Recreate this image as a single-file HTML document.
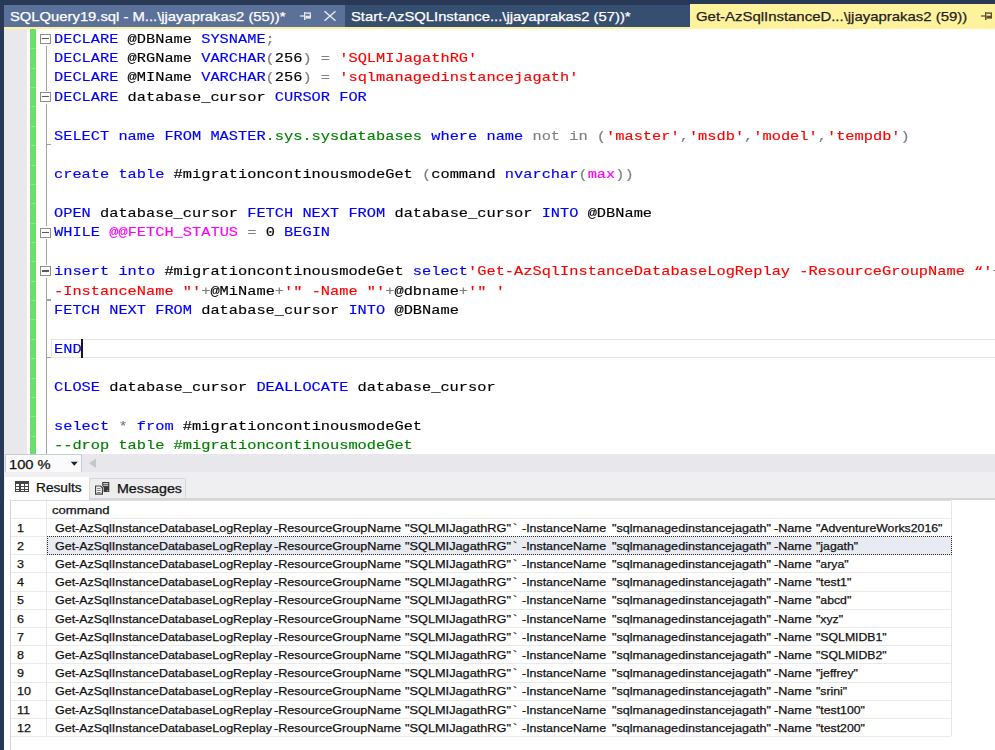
<!DOCTYPE html>
<html><head><meta charset="utf-8">
<style>
*{margin:0;padding:0;box-sizing:border-box}
html,body{width:995px;height:750px;overflow:hidden;background:#fff}
body{position:relative;font-family:"Liberation Sans",sans-serif}
.a{position:absolute}
.t{position:absolute;white-space:pre;height:20px;line-height:20px;transform-origin:0 0;-webkit-text-stroke:0.25px currentColor}
.code{position:absolute;top:0;width:1px;height:454px;-webkit-text-stroke:0.15px currentColor;font-family:"Liberation Mono",monospace;font-size:13.0px;white-space:pre;transform-origin:0 0}
.ln{position:absolute;left:0;height:20px;line-height:20px}
</style></head><body>
<div class="a" style="left:0px;top:0px;width:995px;height:750px;background:#293955;"></div>
<div class="a" style="left:4px;top:5px;width:341px;height:22px;background:#5b7199;"></div>
<div class="a" style="left:345px;top:5px;width:345px;height:22px;background:#364e6f;"></div>
<div class="a" style="left:690px;top:4px;width:305px;height:23px;background:#fff29d;"></div>
<div class="a" style="left:4px;top:27px;width:991px;height:2px;background:#fff29d;"></div>
<div class="t" style="left:10.40px;top:7.40px;font-size:13px;color:#fff;font-family:'Liberation Sans',sans-serif;transform:scaleX(1.1380);">SQLQuery19.sql - M...\jjayaprakas2 (55))*</div>
<div class="t" style="left:350.80px;top:7.40px;font-size:13px;color:#fff;font-family:'Liberation Sans',sans-serif;transform:scaleX(1.1380);">Start-AzSQLInstance...\jjayaprakas2 (57))*</div>
<div class="t" style="left:696.20px;top:7.40px;font-size:13px;color:#1e1e1e;font-family:'Liberation Sans',sans-serif;transform:scaleX(1.1480);">Get-AzSqlInstanceD...\jjayaprakas2 (59))</div>
<svg class="a" style="left:300px;top:11px" width="13" height="10" viewBox="0 0 13 10"><path d="M0 5H4.2" stroke="#e3e7ee" stroke-width="1.3"/><path d="M4.75 1V9" stroke="#e3e7ee" stroke-width="1.5"/><rect x="5.5" y="1.4" width="5.5" height="6.2" fill="#e3e7ee"/><rect x="5.5" y="2.8" width="4.2" height="1.9" fill="#5b7199"/></svg>
<svg class="a" style="left:323px;top:10px" width="14" height="12" viewBox="0 0 14 12"><path d="M1.5 1.3L12.5 10.8M12.5 1.3L1.5 10.8" stroke="#e6e9ef" stroke-width="1.5"/></svg>
<svg class="a" style="left:981px;top:10.8px" width="13" height="10" viewBox="0 0 13 10"><path d="M0 5H4.2" stroke="#5e4e30" stroke-width="1.3"/><path d="M4.75 1V9" stroke="#5e4e30" stroke-width="1.5"/><rect x="5.5" y="1.4" width="5.5" height="6.2" fill="#5e4e30"/><rect x="5.5" y="2.8" width="4.2" height="1.9" fill="#fff29d"/></svg>
<div class="a" style="left:4px;top:29px;width:991px;height:425px;background:#fff;"></div>
<div class="a" style="left:4px;top:29px;width:23px;height:425px;background:#e9e9eb;"></div>
<div class="a" style="left:30px;top:29px;width:6px;height:425px;background:#6ae06a;"></div>
<div class="a" style="left:31px;top:48px;width:5px;height:1px;background:#92e692;"></div>
<div class="a" style="left:31px;top:68px;width:5px;height:1px;background:#92e692;"></div>
<div class="a" style="left:31px;top:87px;width:5px;height:1px;background:#92e692;"></div>
<div class="a" style="left:31px;top:106px;width:5px;height:1px;background:#92e692;"></div>
<div class="a" style="left:31px;top:126px;width:5px;height:1px;background:#92e692;"></div>
<div class="a" style="left:31px;top:145px;width:5px;height:1px;background:#92e692;"></div>
<div class="a" style="left:31px;top:165px;width:5px;height:1px;background:#92e692;"></div>
<div class="a" style="left:31px;top:184px;width:5px;height:1px;background:#92e692;"></div>
<div class="a" style="left:31px;top:203px;width:5px;height:1px;background:#92e692;"></div>
<div class="a" style="left:31px;top:223px;width:5px;height:1px;background:#92e692;"></div>
<div class="a" style="left:31px;top:242px;width:5px;height:1px;background:#92e692;"></div>
<div class="a" style="left:31px;top:261px;width:5px;height:1px;background:#92e692;"></div>
<div class="a" style="left:31px;top:281px;width:5px;height:1px;background:#92e692;"></div>
<div class="a" style="left:31px;top:300px;width:5px;height:1px;background:#92e692;"></div>
<div class="a" style="left:31px;top:319px;width:5px;height:1px;background:#92e692;"></div>
<div class="a" style="left:31px;top:339px;width:5px;height:1px;background:#92e692;"></div>
<div class="a" style="left:31px;top:358px;width:5px;height:1px;background:#92e692;"></div>
<div class="a" style="left:31px;top:378px;width:5px;height:1px;background:#92e692;"></div>
<div class="a" style="left:31px;top:397px;width:5px;height:1px;background:#92e692;"></div>
<div class="a" style="left:31px;top:416px;width:5px;height:1px;background:#92e692;"></div>
<div class="a" style="left:31px;top:436px;width:5px;height:1px;background:#92e692;"></div>
<div class="a" style="left:31px;top:455px;width:5px;height:1px;background:#92e692;"></div>
<div class="a" style="left:45.6px;top:45.5px;width:1.1px;height:45.1px;background:#a2a2a2"></div>
<div class="a" style="left:45.6px;top:103.6px;width:1.1px;height:122.6px;background:#a2a2a2"></div>
<div class="a" style="left:45.6px;top:239.2px;width:1.1px;height:25.7px;background:#a2a2a2"></div>
<div class="a" style="left:45.6px;top:277.9px;width:1.1px;height:176.1px;background:#a2a2a2"></div>
<div class="a" style="left:46px;top:144.2px;width:5px;height:1.2px;background:#a2a2a2"></div>
<div class="a" style="left:46px;top:299.4px;width:5px;height:1.2px;background:#a2a2a2"></div>
<div class="a" style="left:46px;top:356.7px;width:5px;height:1.2px;background:#a2a2a2"></div>
<div class="a" style="left:40px;top:34.0px;width:11px;height:10px;border:1px solid #8e8e8e;background:#fff"></div>
<div class="a" style="left:42px;top:38.0px;width:7px;height:1.4px;background:#5a5a5a"></div>
<div class="a" style="left:40px;top:92.1px;width:11px;height:10px;border:1px solid #8e8e8e;background:#fff"></div>
<div class="a" style="left:42px;top:96.1px;width:7px;height:1.4px;background:#5a5a5a"></div>
<div class="a" style="left:40px;top:227.7px;width:11px;height:10px;border:1px solid #8e8e8e;background:#fff"></div>
<div class="a" style="left:42px;top:231.7px;width:7px;height:1.4px;background:#5a5a5a"></div>
<div class="a" style="left:40px;top:266.4px;width:11px;height:10px;border:1px solid #8e8e8e;background:#fff"></div>
<div class="a" style="left:42px;top:270.4px;width:7px;height:1.4px;background:#5a5a5a"></div>
<div class="a" style="left:51px;top:339px;width:944px;height:19px;border:1px solid #e4e4e8;border-right:none"></div>
<div class="code" style="left:54.0px;transform:scaleX(1.17931)"><div class="ln" style="top:29.74px"><span style="color:#0000ff">DECLARE</span><span style="color:#000000"> @DBName </span><span style="color:#0000ff">SYSNAME</span><span style="color:#808080">;</span></div>
<div class="ln" style="top:49.11px"><span style="color:#0000ff">DECLARE</span><span style="color:#000000"> @RGName </span><span style="color:#0000ff">VARCHAR</span><span style="color:#808080">(</span><span style="color:#000000">256</span><span style="color:#808080">) = </span><span style="color:#ff0000">&#x27;SQLMIJagathRG&#x27;</span></div>
<div class="ln" style="top:68.47px"><span style="color:#0000ff">DECLARE</span><span style="color:#000000"> @MIName </span><span style="color:#0000ff">VARCHAR</span><span style="color:#808080">(</span><span style="color:#000000">256</span><span style="color:#808080">) = </span><span style="color:#ff0000">&#x27;sqlmanagedinstancejagath&#x27;</span></div>
<div class="ln" style="top:87.84px"><span style="color:#0000ff">DECLARE</span><span style="color:#000000"> database_cursor </span><span style="color:#0000ff">CURSOR FOR</span></div>
<div class="ln" style="top:126.57px"><span style="color:#0000ff">SELECT name FROM MASTER</span><span style="color:#008000">.sys.sysdatabases</span><span style="color:#000000"> </span><span style="color:#0000ff">where name</span><span style="color:#000000"> </span><span style="color:#808080">not in (</span><span style="color:#ff0000">&#x27;master&#x27;</span><span style="color:#808080">,</span><span style="color:#ff0000">&#x27;msdb&#x27;</span><span style="color:#808080">,</span><span style="color:#ff0000">&#x27;model&#x27;</span><span style="color:#808080">,</span><span style="color:#ff0000">&#x27;tempdb&#x27;</span><span style="color:#808080">)</span></div>
<div class="ln" style="top:165.30px"><span style="color:#0000ff">create table</span><span style="color:#000000"> #migrationcontinousmodeGet </span><span style="color:#808080">(</span><span style="color:#000000">command </span><span style="color:#0000ff">nvarchar</span><span style="color:#808080">(</span><span style="color:#ff00ff">max</span><span style="color:#808080">))</span></div>
<div class="ln" style="top:204.03px"><span style="color:#0000ff">OPEN</span><span style="color:#000000"> database_cursor </span><span style="color:#0000ff">FETCH NEXT FROM</span><span style="color:#000000"> database_cursor </span><span style="color:#0000ff">INTO</span><span style="color:#000000"> @DBName</span></div>
<div class="ln" style="top:223.40px"><span style="color:#0000ff">WHILE</span><span style="color:#000000"> </span><span style="color:#ff00ff">@@FETCH_STATUS</span><span style="color:#000000"> </span><span style="color:#808080">=</span><span style="color:#000000"> 0 </span><span style="color:#0000ff">BEGIN</span></div>
<div class="ln" style="top:262.13px"><span style="color:#0000ff">insert into</span><span style="color:#000000"> #migrationcontinousmodeGet </span><span style="color:#0000ff">select</span><span style="color:#ff0000">&#x27;Get-AzSqlInstanceDatabaseLogReplay -ResourceGroupName “&#x27;</span><span style="color:#808080">+</span></div>
<div class="ln" style="top:281.50px"><span style="color:#ff0000">-InstanceName &quot;&#x27;</span><span style="color:#808080">+</span><span style="color:#000000">@MiName</span><span style="color:#808080">+</span><span style="color:#ff0000">&#x27;&quot; -Name &quot;&#x27;</span><span style="color:#808080">+</span><span style="color:#000000">@dbname</span><span style="color:#808080">+</span><span style="color:#ff0000">&#x27;&quot; &#x27;</span></div>
<div class="ln" style="top:300.86px"><span style="color:#0000ff">FETCH NEXT FROM</span><span style="color:#000000"> database_cursor </span><span style="color:#0000ff">INTO</span><span style="color:#000000"> @DBName</span></div>
<div class="ln" style="top:339.60px"><span style="color:#0000ff">END</span></div>
<div class="ln" style="top:378.33px"><span style="color:#0000ff">CLOSE</span><span style="color:#000000"> database_cursor </span><span style="color:#0000ff">DEALLOCATE</span><span style="color:#000000"> database_cursor</span></div>
<div class="ln" style="top:417.06px"><span style="color:#0000ff">select</span><span style="color:#000000"> </span><span style="color:#808080">*</span><span style="color:#000000"> </span><span style="color:#0000ff">from</span><span style="color:#000000"> #migrationcontinousmodeGet</span></div>
<div class="ln" style="top:436.43px"><span style="color:#008000">--drop table #migrationcontinousmodeGet</span></div></div>
<div class="a" style="left:81px;top:339px;width:2px;height:19px;background:#1a1a1a;"></div>
<div class="a" style="left:4px;top:454px;width:991px;height:18px;background:#e8e8ec;"></div>
<div class="a" style="left:5px;top:454px;width:77px;height:19px;border:1px solid #c3cadb;background:#fbfbfc"></div>
<div class="t" style="left:9.00px;top:454.50px;font-size:13px;color:#111;font-family:'Liberation Sans',sans-serif;transform:scaleX(1.1300);">100 %</div>
<svg class="a" style="left:70px;top:461px" width="9" height="6" viewBox="0 0 9 6"><path d="M0.8 0.8H7.8L4.3 4.8Z" fill="#1b2235"/></svg>
<svg class="a" style="left:88px;top:458px" width="9" height="11" viewBox="0 0 9 11"><path d="M8 0.5V10L1 5.25Z" fill="#c6c7cc"/></svg>
<div class="a" style="left:4px;top:472px;width:991px;height:27px;background:#efeff2;"></div>
<div class="a" style="left:5px;top:476.5px;width:84px;height:1px;background:#e4e4e8;"></div>
<div class="a" style="left:4px;top:499px;width:991px;height:251px;background:#fff;"></div>
<div class="a" style="left:5px;top:477px;width:84px;height:22px;background:#fff;"></div>
<div class="a" style="left:89px;top:478.3px;width:97px;height:19.7px;border:1px solid #d9d9dd;border-bottom:none;background:#ededf0"></div>
<div class="a" style="left:89px;top:498px;width:906px;height:1.5px;background:#d6d6da;"></div>
<svg class="a" style="left:15px;top:481px" width="14" height="11" viewBox="0 0 14 11" shape-rendering="crispEdges"><rect x="0" y="0" width="14" height="11" fill="#454545"/><g fill="#fff"><rect x="1" y="3" width="3" height="2"/><rect x="5.5" y="3" width="3" height="2"/><rect x="10" y="3" width="3" height="2"/><rect x="1" y="6" width="3" height="2"/><rect x="5.5" y="6" width="3" height="2"/><rect x="10" y="6" width="3" height="2"/><rect x="1" y="9" width="3" height="1"/><rect x="5.5" y="9" width="3" height="1"/><rect x="10" y="9" width="3" height="1"/></g></svg>
<div class="t" style="left:36.00px;top:477.74px;font-size:12px;color:#111;font-family:'Liberation Sans',sans-serif;transform:scaleX(1.1400);">Results</div>
<svg class="a" style="left:94px;top:481px" width="16" height="15" viewBox="0 0 16 15"><rect x="8.2" y="1" width="7.1" height="10" fill="#3a3a3a"/><rect x="9.3" y="2.2" width="4.9" height="1.1" fill="#f0f0f0"/><rect x="9.3" y="4.2" width="4.9" height="0.9" fill="#d8d8d8"/><rect x="13" y="9.2" width="1.2" height="1" fill="#bbb"/><path d="M0.6 3.9H7L9.6 6.5V14.3H0.6Z" fill="#fff"/><path d="M1.6 5H6.6L8.4 6.8V13.1H1.6Z" fill="#fff" stroke="#3e3e3e" stroke-width="1.2"/><path d="M3.1 7.4H6.7M3.1 9.4H6.7M3.1 11.5H6.7" stroke="#6a6a6a" stroke-width="0.9"/></svg>
<div class="t" style="left:116.80px;top:478.60px;font-size:12.4px;color:#111;font-family:'Liberation Sans',sans-serif;transform:scaleX(1.1500);">Messages</div>
<div class="a" style="left:9.6px;top:499px;width:1.2px;height:251px;background:#d4d4d4;"></div>
<div class="a" style="left:10px;top:500px;width:942px;height:1px;background:#dedede;"></div>
<div class="a" style="left:46px;top:499px;width:1px;height:237.07999999999993px;background:#e6e6e6;"></div>
<div class="a" style="left:951px;top:499px;width:1px;height:237.07999999999993px;background:#e6e6e6;"></div>
<div class="a" style="left:11px;top:517.8px;width:940px;height:1px;background:#ebebeb;"></div>
<div class="t" style="left:52.20px;top:500.22px;font-size:11.5px;color:#111;font-family:'Liberation Sans',sans-serif;transform:scaleX(1.1400);">command</div>
<div class="a" style="left:47px;top:536px;width:905px;height:19px;background:#e8ebf2;"></div>
<div class="t" style="left:17.30px;top:517.62px;font-size:11.5px;color:#111;font-family:'Liberation Sans',sans-serif;transform:scaleX(1.0900);">1</div>
<div class="t" style="left:54.60px;top:517.62px;font-size:11.5px;color:#111;font-family:'Liberation Sans',sans-serif;transform:scaleX(1.0840);">Get-AzSqlInstanceDatabaseLogReplay</div>
<div class="t" style="left:274.00px;top:517.62px;font-size:11.5px;color:#111;font-family:'Liberation Sans',sans-serif;transform:scaleX(1.0980);">-ResourceGroupName</div>
<div class="t" style="left:404.60px;top:517.62px;font-size:11.5px;color:#111;font-family:'Liberation Sans',sans-serif;transform:scaleX(1.1070);">&quot;SQLMIJagathRG&quot;</div>
<div class="t" style="left:512.50px;top:517.62px;font-size:11.5px;color:#111;font-family:'Liberation Sans',sans-serif;transform:scaleX(1.0900);">`</div>
<div class="t" style="left:522.00px;top:517.62px;font-size:11.5px;color:#111;font-family:'Liberation Sans',sans-serif;transform:scaleX(1.0780);">-InstanceName</div>
<div class="t" style="left:611.70px;top:517.62px;font-size:11.5px;color:#111;font-family:'Liberation Sans',sans-serif;transform:scaleX(1.0960);">&quot;sqlmanagedinstancejagath&quot;</div>
<div class="t" style="left:773.80px;top:517.62px;font-size:11.5px;color:#111;font-family:'Liberation Sans',sans-serif;transform:scaleX(1.0950);">-Name</div>
<div class="t" style="left:815.60px;top:517.62px;font-size:11.5px;color:#111;font-family:'Liberation Sans',sans-serif;transform:scaleX(1.0660);">&quot;AdventureWorks2016&quot;</div>
<div class="a" style="left:11px;top:536px;width:940px;height:1px;background:#ebebeb;"></div>
<div class="t" style="left:17.30px;top:535.81px;font-size:11.5px;color:#111;font-family:'Liberation Sans',sans-serif;transform:scaleX(1.0900);">2</div>
<div class="t" style="left:54.60px;top:535.81px;font-size:11.5px;color:#111;font-family:'Liberation Sans',sans-serif;transform:scaleX(1.0840);">Get-AzSqlInstanceDatabaseLogReplay</div>
<div class="t" style="left:274.00px;top:535.81px;font-size:11.5px;color:#111;font-family:'Liberation Sans',sans-serif;transform:scaleX(1.0980);">-ResourceGroupName</div>
<div class="t" style="left:404.60px;top:535.81px;font-size:11.5px;color:#111;font-family:'Liberation Sans',sans-serif;transform:scaleX(1.1070);">&quot;SQLMIJagathRG&quot;</div>
<div class="t" style="left:512.50px;top:535.81px;font-size:11.5px;color:#111;font-family:'Liberation Sans',sans-serif;transform:scaleX(1.0900);">`</div>
<div class="t" style="left:522.00px;top:535.81px;font-size:11.5px;color:#111;font-family:'Liberation Sans',sans-serif;transform:scaleX(1.0780);">-InstanceName</div>
<div class="t" style="left:611.70px;top:535.81px;font-size:11.5px;color:#111;font-family:'Liberation Sans',sans-serif;transform:scaleX(1.0960);">&quot;sqlmanagedinstancejagath&quot;</div>
<div class="t" style="left:773.80px;top:535.81px;font-size:11.5px;color:#111;font-family:'Liberation Sans',sans-serif;transform:scaleX(1.0950);">-Name</div>
<div class="t" style="left:815.60px;top:535.81px;font-size:11.5px;color:#111;font-family:'Liberation Sans',sans-serif;transform:scaleX(1.0660);">&quot;jagath&quot;</div>
<div class="a" style="left:11px;top:554px;width:940px;height:1px;background:#ebebeb;"></div>
<div class="t" style="left:17.30px;top:554.00px;font-size:11.5px;color:#111;font-family:'Liberation Sans',sans-serif;transform:scaleX(1.0900);">3</div>
<div class="t" style="left:54.60px;top:554.00px;font-size:11.5px;color:#111;font-family:'Liberation Sans',sans-serif;transform:scaleX(1.0840);">Get-AzSqlInstanceDatabaseLogReplay</div>
<div class="t" style="left:274.00px;top:554.00px;font-size:11.5px;color:#111;font-family:'Liberation Sans',sans-serif;transform:scaleX(1.0980);">-ResourceGroupName</div>
<div class="t" style="left:404.60px;top:554.00px;font-size:11.5px;color:#111;font-family:'Liberation Sans',sans-serif;transform:scaleX(1.1070);">&quot;SQLMIJagathRG&quot;</div>
<div class="t" style="left:512.50px;top:554.00px;font-size:11.5px;color:#111;font-family:'Liberation Sans',sans-serif;transform:scaleX(1.0900);">`</div>
<div class="t" style="left:522.00px;top:554.00px;font-size:11.5px;color:#111;font-family:'Liberation Sans',sans-serif;transform:scaleX(1.0780);">-InstanceName</div>
<div class="t" style="left:611.70px;top:554.00px;font-size:11.5px;color:#111;font-family:'Liberation Sans',sans-serif;transform:scaleX(1.0960);">&quot;sqlmanagedinstancejagath&quot;</div>
<div class="t" style="left:773.80px;top:554.00px;font-size:11.5px;color:#111;font-family:'Liberation Sans',sans-serif;transform:scaleX(1.0950);">-Name</div>
<div class="t" style="left:815.60px;top:554.00px;font-size:11.5px;color:#111;font-family:'Liberation Sans',sans-serif;transform:scaleX(1.0660);">&quot;arya&quot;</div>
<div class="a" style="left:11px;top:572px;width:940px;height:1px;background:#ebebeb;"></div>
<div class="t" style="left:17.30px;top:572.19px;font-size:11.5px;color:#111;font-family:'Liberation Sans',sans-serif;transform:scaleX(1.0900);">4</div>
<div class="t" style="left:54.60px;top:572.19px;font-size:11.5px;color:#111;font-family:'Liberation Sans',sans-serif;transform:scaleX(1.0840);">Get-AzSqlInstanceDatabaseLogReplay</div>
<div class="t" style="left:274.00px;top:572.19px;font-size:11.5px;color:#111;font-family:'Liberation Sans',sans-serif;transform:scaleX(1.0980);">-ResourceGroupName</div>
<div class="t" style="left:404.60px;top:572.19px;font-size:11.5px;color:#111;font-family:'Liberation Sans',sans-serif;transform:scaleX(1.1070);">&quot;SQLMIJagathRG&quot;</div>
<div class="t" style="left:512.50px;top:572.19px;font-size:11.5px;color:#111;font-family:'Liberation Sans',sans-serif;transform:scaleX(1.0900);">`</div>
<div class="t" style="left:522.00px;top:572.19px;font-size:11.5px;color:#111;font-family:'Liberation Sans',sans-serif;transform:scaleX(1.0780);">-InstanceName</div>
<div class="t" style="left:611.70px;top:572.19px;font-size:11.5px;color:#111;font-family:'Liberation Sans',sans-serif;transform:scaleX(1.0960);">&quot;sqlmanagedinstancejagath&quot;</div>
<div class="t" style="left:773.80px;top:572.19px;font-size:11.5px;color:#111;font-family:'Liberation Sans',sans-serif;transform:scaleX(1.0950);">-Name</div>
<div class="t" style="left:815.60px;top:572.19px;font-size:11.5px;color:#111;font-family:'Liberation Sans',sans-serif;transform:scaleX(1.0660);">&quot;test1&quot;</div>
<div class="a" style="left:11px;top:591px;width:940px;height:1px;background:#ebebeb;"></div>
<div class="t" style="left:17.30px;top:590.38px;font-size:11.5px;color:#111;font-family:'Liberation Sans',sans-serif;transform:scaleX(1.0900);">5</div>
<div class="t" style="left:54.60px;top:590.38px;font-size:11.5px;color:#111;font-family:'Liberation Sans',sans-serif;transform:scaleX(1.0840);">Get-AzSqlInstanceDatabaseLogReplay</div>
<div class="t" style="left:274.00px;top:590.38px;font-size:11.5px;color:#111;font-family:'Liberation Sans',sans-serif;transform:scaleX(1.0980);">-ResourceGroupName</div>
<div class="t" style="left:404.60px;top:590.38px;font-size:11.5px;color:#111;font-family:'Liberation Sans',sans-serif;transform:scaleX(1.1070);">&quot;SQLMIJagathRG&quot;</div>
<div class="t" style="left:512.50px;top:590.38px;font-size:11.5px;color:#111;font-family:'Liberation Sans',sans-serif;transform:scaleX(1.0900);">`</div>
<div class="t" style="left:522.00px;top:590.38px;font-size:11.5px;color:#111;font-family:'Liberation Sans',sans-serif;transform:scaleX(1.0780);">-InstanceName</div>
<div class="t" style="left:611.70px;top:590.38px;font-size:11.5px;color:#111;font-family:'Liberation Sans',sans-serif;transform:scaleX(1.0960);">&quot;sqlmanagedinstancejagath&quot;</div>
<div class="t" style="left:773.80px;top:590.38px;font-size:11.5px;color:#111;font-family:'Liberation Sans',sans-serif;transform:scaleX(1.0950);">-Name</div>
<div class="t" style="left:815.60px;top:590.38px;font-size:11.5px;color:#111;font-family:'Liberation Sans',sans-serif;transform:scaleX(1.0660);">&quot;abcd&quot;</div>
<div class="a" style="left:11px;top:609px;width:940px;height:1px;background:#ebebeb;"></div>
<div class="t" style="left:17.30px;top:608.57px;font-size:11.5px;color:#111;font-family:'Liberation Sans',sans-serif;transform:scaleX(1.0900);">6</div>
<div class="t" style="left:54.60px;top:608.57px;font-size:11.5px;color:#111;font-family:'Liberation Sans',sans-serif;transform:scaleX(1.0840);">Get-AzSqlInstanceDatabaseLogReplay</div>
<div class="t" style="left:274.00px;top:608.57px;font-size:11.5px;color:#111;font-family:'Liberation Sans',sans-serif;transform:scaleX(1.0980);">-ResourceGroupName</div>
<div class="t" style="left:404.60px;top:608.57px;font-size:11.5px;color:#111;font-family:'Liberation Sans',sans-serif;transform:scaleX(1.1070);">&quot;SQLMIJagathRG&quot;</div>
<div class="t" style="left:512.50px;top:608.57px;font-size:11.5px;color:#111;font-family:'Liberation Sans',sans-serif;transform:scaleX(1.0900);">`</div>
<div class="t" style="left:522.00px;top:608.57px;font-size:11.5px;color:#111;font-family:'Liberation Sans',sans-serif;transform:scaleX(1.0780);">-InstanceName</div>
<div class="t" style="left:611.70px;top:608.57px;font-size:11.5px;color:#111;font-family:'Liberation Sans',sans-serif;transform:scaleX(1.0960);">&quot;sqlmanagedinstancejagath&quot;</div>
<div class="t" style="left:773.80px;top:608.57px;font-size:11.5px;color:#111;font-family:'Liberation Sans',sans-serif;transform:scaleX(1.0950);">-Name</div>
<div class="t" style="left:815.60px;top:608.57px;font-size:11.5px;color:#111;font-family:'Liberation Sans',sans-serif;transform:scaleX(1.0660);">&quot;xyz&quot;</div>
<div class="a" style="left:11px;top:627px;width:940px;height:1px;background:#ebebeb;"></div>
<div class="t" style="left:17.30px;top:626.76px;font-size:11.5px;color:#111;font-family:'Liberation Sans',sans-serif;transform:scaleX(1.0900);">7</div>
<div class="t" style="left:54.60px;top:626.76px;font-size:11.5px;color:#111;font-family:'Liberation Sans',sans-serif;transform:scaleX(1.0840);">Get-AzSqlInstanceDatabaseLogReplay</div>
<div class="t" style="left:274.00px;top:626.76px;font-size:11.5px;color:#111;font-family:'Liberation Sans',sans-serif;transform:scaleX(1.0980);">-ResourceGroupName</div>
<div class="t" style="left:404.60px;top:626.76px;font-size:11.5px;color:#111;font-family:'Liberation Sans',sans-serif;transform:scaleX(1.1070);">&quot;SQLMIJagathRG&quot;</div>
<div class="t" style="left:512.50px;top:626.76px;font-size:11.5px;color:#111;font-family:'Liberation Sans',sans-serif;transform:scaleX(1.0900);">`</div>
<div class="t" style="left:522.00px;top:626.76px;font-size:11.5px;color:#111;font-family:'Liberation Sans',sans-serif;transform:scaleX(1.0780);">-InstanceName</div>
<div class="t" style="left:611.70px;top:626.76px;font-size:11.5px;color:#111;font-family:'Liberation Sans',sans-serif;transform:scaleX(1.0960);">&quot;sqlmanagedinstancejagath&quot;</div>
<div class="t" style="left:773.80px;top:626.76px;font-size:11.5px;color:#111;font-family:'Liberation Sans',sans-serif;transform:scaleX(1.0950);">-Name</div>
<div class="t" style="left:815.60px;top:626.76px;font-size:11.5px;color:#111;font-family:'Liberation Sans',sans-serif;transform:scaleX(1.0660);">&quot;SQLMIDB1&quot;</div>
<div class="a" style="left:11px;top:645px;width:940px;height:1px;background:#ebebeb;"></div>
<div class="t" style="left:17.30px;top:644.95px;font-size:11.5px;color:#111;font-family:'Liberation Sans',sans-serif;transform:scaleX(1.0900);">8</div>
<div class="t" style="left:54.60px;top:644.95px;font-size:11.5px;color:#111;font-family:'Liberation Sans',sans-serif;transform:scaleX(1.0840);">Get-AzSqlInstanceDatabaseLogReplay</div>
<div class="t" style="left:274.00px;top:644.95px;font-size:11.5px;color:#111;font-family:'Liberation Sans',sans-serif;transform:scaleX(1.0980);">-ResourceGroupName</div>
<div class="t" style="left:404.60px;top:644.95px;font-size:11.5px;color:#111;font-family:'Liberation Sans',sans-serif;transform:scaleX(1.1070);">&quot;SQLMIJagathRG&quot;</div>
<div class="t" style="left:512.50px;top:644.95px;font-size:11.5px;color:#111;font-family:'Liberation Sans',sans-serif;transform:scaleX(1.0900);">`</div>
<div class="t" style="left:522.00px;top:644.95px;font-size:11.5px;color:#111;font-family:'Liberation Sans',sans-serif;transform:scaleX(1.0780);">-InstanceName</div>
<div class="t" style="left:611.70px;top:644.95px;font-size:11.5px;color:#111;font-family:'Liberation Sans',sans-serif;transform:scaleX(1.0960);">&quot;sqlmanagedinstancejagath&quot;</div>
<div class="t" style="left:773.80px;top:644.95px;font-size:11.5px;color:#111;font-family:'Liberation Sans',sans-serif;transform:scaleX(1.0950);">-Name</div>
<div class="t" style="left:815.60px;top:644.95px;font-size:11.5px;color:#111;font-family:'Liberation Sans',sans-serif;transform:scaleX(1.0660);">&quot;SQLMIDB2&quot;</div>
<div class="a" style="left:11px;top:663px;width:940px;height:1px;background:#ebebeb;"></div>
<div class="t" style="left:17.30px;top:663.14px;font-size:11.5px;color:#111;font-family:'Liberation Sans',sans-serif;transform:scaleX(1.0900);">9</div>
<div class="t" style="left:54.60px;top:663.14px;font-size:11.5px;color:#111;font-family:'Liberation Sans',sans-serif;transform:scaleX(1.0840);">Get-AzSqlInstanceDatabaseLogReplay</div>
<div class="t" style="left:274.00px;top:663.14px;font-size:11.5px;color:#111;font-family:'Liberation Sans',sans-serif;transform:scaleX(1.0980);">-ResourceGroupName</div>
<div class="t" style="left:404.60px;top:663.14px;font-size:11.5px;color:#111;font-family:'Liberation Sans',sans-serif;transform:scaleX(1.1070);">&quot;SQLMIJagathRG&quot;</div>
<div class="t" style="left:512.50px;top:663.14px;font-size:11.5px;color:#111;font-family:'Liberation Sans',sans-serif;transform:scaleX(1.0900);">`</div>
<div class="t" style="left:522.00px;top:663.14px;font-size:11.5px;color:#111;font-family:'Liberation Sans',sans-serif;transform:scaleX(1.0780);">-InstanceName</div>
<div class="t" style="left:611.70px;top:663.14px;font-size:11.5px;color:#111;font-family:'Liberation Sans',sans-serif;transform:scaleX(1.0960);">&quot;sqlmanagedinstancejagath&quot;</div>
<div class="t" style="left:773.80px;top:663.14px;font-size:11.5px;color:#111;font-family:'Liberation Sans',sans-serif;transform:scaleX(1.0950);">-Name</div>
<div class="t" style="left:815.60px;top:663.14px;font-size:11.5px;color:#111;font-family:'Liberation Sans',sans-serif;transform:scaleX(1.0660);">&quot;jeffrey&quot;</div>
<div class="a" style="left:11px;top:682px;width:940px;height:1px;background:#ebebeb;"></div>
<div class="t" style="left:17.30px;top:681.33px;font-size:11.5px;color:#111;font-family:'Liberation Sans',sans-serif;transform:scaleX(1.0900);">10</div>
<div class="t" style="left:54.60px;top:681.33px;font-size:11.5px;color:#111;font-family:'Liberation Sans',sans-serif;transform:scaleX(1.0840);">Get-AzSqlInstanceDatabaseLogReplay</div>
<div class="t" style="left:274.00px;top:681.33px;font-size:11.5px;color:#111;font-family:'Liberation Sans',sans-serif;transform:scaleX(1.0980);">-ResourceGroupName</div>
<div class="t" style="left:404.60px;top:681.33px;font-size:11.5px;color:#111;font-family:'Liberation Sans',sans-serif;transform:scaleX(1.1070);">&quot;SQLMIJagathRG&quot;</div>
<div class="t" style="left:512.50px;top:681.33px;font-size:11.5px;color:#111;font-family:'Liberation Sans',sans-serif;transform:scaleX(1.0900);">`</div>
<div class="t" style="left:522.00px;top:681.33px;font-size:11.5px;color:#111;font-family:'Liberation Sans',sans-serif;transform:scaleX(1.0780);">-InstanceName</div>
<div class="t" style="left:611.70px;top:681.33px;font-size:11.5px;color:#111;font-family:'Liberation Sans',sans-serif;transform:scaleX(1.0960);">&quot;sqlmanagedinstancejagath&quot;</div>
<div class="t" style="left:773.80px;top:681.33px;font-size:11.5px;color:#111;font-family:'Liberation Sans',sans-serif;transform:scaleX(1.0950);">-Name</div>
<div class="t" style="left:815.60px;top:681.33px;font-size:11.5px;color:#111;font-family:'Liberation Sans',sans-serif;transform:scaleX(1.0660);">&quot;srini&quot;</div>
<div class="a" style="left:11px;top:700px;width:940px;height:1px;background:#ebebeb;"></div>
<div class="t" style="left:17.30px;top:699.52px;font-size:11.5px;color:#111;font-family:'Liberation Sans',sans-serif;transform:scaleX(1.0900);">11</div>
<div class="t" style="left:54.60px;top:699.52px;font-size:11.5px;color:#111;font-family:'Liberation Sans',sans-serif;transform:scaleX(1.0840);">Get-AzSqlInstanceDatabaseLogReplay</div>
<div class="t" style="left:274.00px;top:699.52px;font-size:11.5px;color:#111;font-family:'Liberation Sans',sans-serif;transform:scaleX(1.0980);">-ResourceGroupName</div>
<div class="t" style="left:404.60px;top:699.52px;font-size:11.5px;color:#111;font-family:'Liberation Sans',sans-serif;transform:scaleX(1.1070);">&quot;SQLMIJagathRG&quot;</div>
<div class="t" style="left:512.50px;top:699.52px;font-size:11.5px;color:#111;font-family:'Liberation Sans',sans-serif;transform:scaleX(1.0900);">`</div>
<div class="t" style="left:522.00px;top:699.52px;font-size:11.5px;color:#111;font-family:'Liberation Sans',sans-serif;transform:scaleX(1.0780);">-InstanceName</div>
<div class="t" style="left:611.70px;top:699.52px;font-size:11.5px;color:#111;font-family:'Liberation Sans',sans-serif;transform:scaleX(1.0960);">&quot;sqlmanagedinstancejagath&quot;</div>
<div class="t" style="left:773.80px;top:699.52px;font-size:11.5px;color:#111;font-family:'Liberation Sans',sans-serif;transform:scaleX(1.0950);">-Name</div>
<div class="t" style="left:815.60px;top:699.52px;font-size:11.5px;color:#111;font-family:'Liberation Sans',sans-serif;transform:scaleX(1.0660);">&quot;test100&quot;</div>
<div class="a" style="left:11px;top:718px;width:940px;height:1px;background:#ebebeb;"></div>
<div class="t" style="left:17.30px;top:717.71px;font-size:11.5px;color:#111;font-family:'Liberation Sans',sans-serif;transform:scaleX(1.0900);">12</div>
<div class="t" style="left:54.60px;top:717.71px;font-size:11.5px;color:#111;font-family:'Liberation Sans',sans-serif;transform:scaleX(1.0840);">Get-AzSqlInstanceDatabaseLogReplay</div>
<div class="t" style="left:274.00px;top:717.71px;font-size:11.5px;color:#111;font-family:'Liberation Sans',sans-serif;transform:scaleX(1.0980);">-ResourceGroupName</div>
<div class="t" style="left:404.60px;top:717.71px;font-size:11.5px;color:#111;font-family:'Liberation Sans',sans-serif;transform:scaleX(1.1070);">&quot;SQLMIJagathRG&quot;</div>
<div class="t" style="left:512.50px;top:717.71px;font-size:11.5px;color:#111;font-family:'Liberation Sans',sans-serif;transform:scaleX(1.0900);">`</div>
<div class="t" style="left:522.00px;top:717.71px;font-size:11.5px;color:#111;font-family:'Liberation Sans',sans-serif;transform:scaleX(1.0780);">-InstanceName</div>
<div class="t" style="left:611.70px;top:717.71px;font-size:11.5px;color:#111;font-family:'Liberation Sans',sans-serif;transform:scaleX(1.0960);">&quot;sqlmanagedinstancejagath&quot;</div>
<div class="t" style="left:773.80px;top:717.71px;font-size:11.5px;color:#111;font-family:'Liberation Sans',sans-serif;transform:scaleX(1.0950);">-Name</div>
<div class="t" style="left:815.60px;top:717.71px;font-size:11.5px;color:#111;font-family:'Liberation Sans',sans-serif;transform:scaleX(1.0660);">&quot;test200&quot;</div>
<div class="a" style="left:11px;top:736px;width:940px;height:1px;background:#ebebeb;"></div>
<div class="a" style="left:47px;top:536.00px;width:905px;height:1px;background:repeating-linear-gradient(90deg,#2a2a2a 0 1px,transparent 1px 2px)"></div>
<div class="a" style="left:47px;top:554.00px;width:905px;height:1px;background:repeating-linear-gradient(90deg,#2a2a2a 0 1px,transparent 1px 2px)"></div>
<div class="a" style="left:47px;top:536.00px;width:1px;height:19px;background:repeating-linear-gradient(180deg,#2a2a2a 0 1px,transparent 1px 2px)"></div>
<div class="a" style="left:951px;top:536.00px;width:1px;height:19px;background:repeating-linear-gradient(180deg,#2a2a2a 0 1px,transparent 1px 2px)"></div>
</body></html>
